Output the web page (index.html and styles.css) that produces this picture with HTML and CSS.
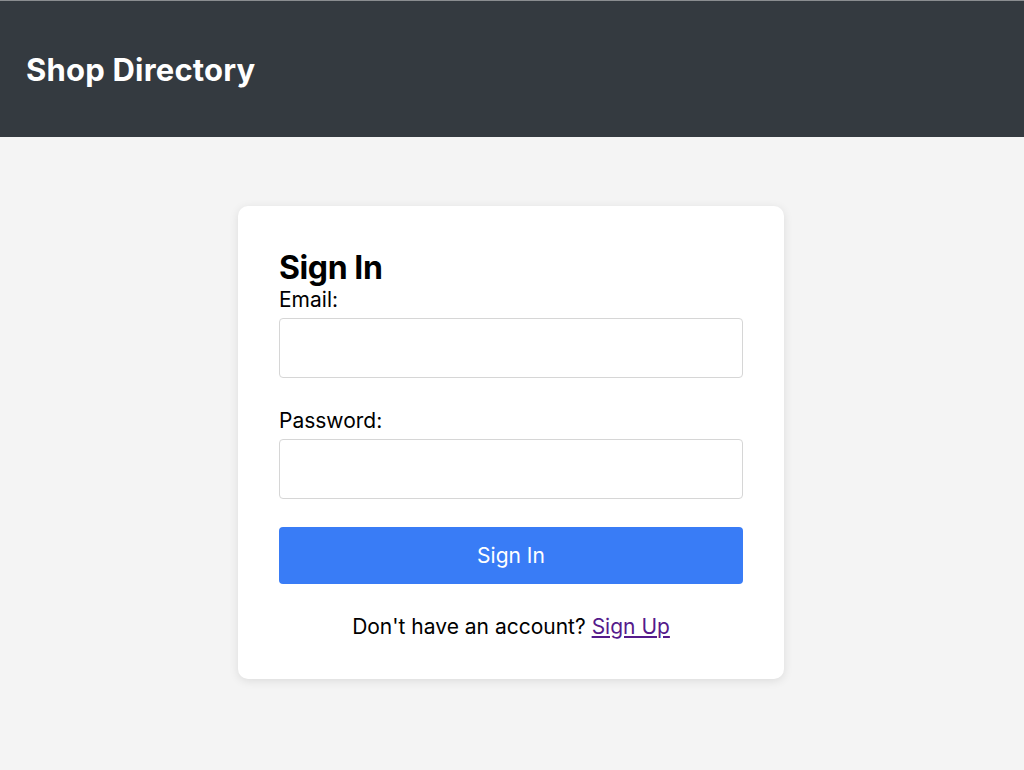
FILE: index.html
```html
<!DOCTYPE html>
<html lang="en">
<head>
<meta charset="utf-8">
<title>Shop Directory</title>
<link rel="stylesheet" href="styles.css">
</head>
<body>
<header class="topbar">
  <h1 class="brand">Shop Directory</h1>
</header>
<main class="page">
  <section class="card">
    <h2 class="card-title">Sign In</h2>
    <form class="form">
      <label class="label" for="email">Email:</label>
      <input class="input" id="email" type="email">
      <label class="label label-gap" for="password">Password:</label>
      <input class="input" id="password" type="password">
      <button class="btn" type="button">Sign In</button>
    </form>
    <p class="alt">Don't have an account? <a class="link" href="#signup">Sign Up</a></p>
  </section>
</main>
</body>
</html>
```
FILE: styles.css
```css
* { box-sizing: border-box; }
html, body { margin: 0; }
body {
  font-family: Inter, "Noto Sans", sans-serif;
  background: #f4f4f4;
  color: #000;
  height: 770px;
}
.topbar {
  background: #343a40;
  border-top: 1px solid #8a8d90;
  height: 137px;
  display: flex;
  align-items: center;
  padding-left: 26px;
}
.brand {
  margin: 0;
  color: #fff;
  font-size: 31px;
  font-weight: 700;
  letter-spacing: 0.2px;
}
.page {
  display: flex;
  justify-content: center;
  padding-top: 69px;
  padding-right: 2px;
}
.card {
  width: 546px;
  background: #fff;
  border-radius: 10px;
  box-shadow: 0 2px 10px rgba(0,0,0,0.1);
  padding: 43px 41px 40px;
}
.card-title {
  margin: 0;
  font-size: 32px;
  line-height: 1.2;
  font-weight: 700;
  letter-spacing: -0.4px;
}
.form { display: flex; flex-direction: column; }
.label {
  font-size: 21px;
  margin-bottom: 6px;
}
.label-gap { margin-top: 30px; }
.input {
  height: 60px;
  border: 1px solid #d6d6d6;
  border-radius: 4px;
  font-size: 18px;
  padding: 0 12px;
  background: #fff;
}
.btn {
  margin-top: 28px;
  height: 57px;
  border: none;
  border-radius: 4px;
  background: #397cf6;
  color: #fff;
  font-family: inherit;
  font-size: 21px;
}
.alt {
  margin: 30px 0 0;
  text-align: center;
  font-size: 21px;
}
.link { color: #551a8b; }
```
